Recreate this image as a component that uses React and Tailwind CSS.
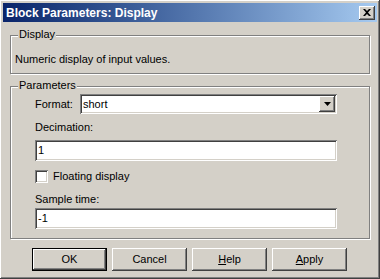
import React from 'react';

// Classic Win2000 3D edges
const raised = 'bg-[#d4d0c8] shadow-[inset_-1px_-1px_#404040,inset_1px_1px_#ffffff,inset_-2px_-2px_#808080,inset_2px_2px_#d4d0c8]';
const sunken = 'bg-white shadow-[inset_1px_1px_#808080,inset_-1px_-1px_#ffffff,inset_2px_2px_#404040,inset_-2px_-2px_#d4d0c8]';

const GroupBox = ({ label, className, children }) => (
  <div className={`relative border border-[#808080] shadow-[inset_1px_1px_#ffffff,1px_1px_#ffffff] ${className}`}>
    <span className="absolute left-[7px] top-[-8px] bg-[#d4d0c8] px-px leading-[13px]">{label}</span>
    {children}
  </div>
);

const TextField = ({ value }) => (
  <div className={`h-[21px] w-[302px] ${sunken} pl-[3px] flex items-center`}>{value}</div>
);

const Button = ({ children, isDefault }) => (
  <div className={`w-[75px] h-[23px] flex items-center justify-center ${isDefault ? 'border border-black' : ''} ${raised}`}>
    {children}
  </div>
);

const App = () => {
  return (
    <div className={`w-[380px] h-[279px] p-[3px] flex flex-col ${raised} font-['Liberation_Sans',Arial,sans-serif] text-[11px] text-black`}>
      {/* Barra de título */}
      <div className="h-[19px] flex items-center justify-between pl-[3px] pr-[2px] bg-linear-to-r from-[#0a246a] to-[#a6caf0]">
        <span className="text-white font-bold text-[12px] leading-none">Block Parameters: Display</span>
        <div className={`w-[16px] h-[14px] flex items-center justify-center ${raised}`}>
          <svg width="8" height="7" viewBox="0 0 8 7">
            <path d="M0 0h2l2 2 2-2h2L5 3.5 8 7H6L4 5 2 7H0l3-3.5z" fill="black" />
          </svg>
        </div>
      </div>

      <GroupBox label="Display" className="mt-[13px] mx-[7px] h-[39px] pt-[15px] pl-[4px]">
        <span className="leading-[13px]">Numeric display of input values.</span>
      </GroupBox>

      <GroupBox label="Parameters" className="mt-[12px] mx-[7px] h-[153px] pl-[24px] pt-[7px] flex flex-col">
        <div className="flex items-center">
          <span className="w-[45px] leading-[13px]">Format:</span>
          <div className={`h-[20px] w-[257px] ${sunken} pl-[3px] pr-[2px] flex items-center justify-between`}>
            <span>short</span>
            <div className={`w-[16px] h-[16px] flex items-center justify-center ${raised}`}>
              <svg width="7" height="4" viewBox="0 0 7 4">
                <path d="M0 0h7L3.5 4z" fill="black" />
              </svg>
            </div>
          </div>
        </div>
        <span className="mt-[7px] leading-[13px]">Decimation:</span>
        <div className="mt-[6px]">
          <TextField value="1" />
        </div>
        <div className="mt-[9px] flex items-center">
          <div className={`w-[13px] h-[13px] ${sunken}`} />
          <span className="ml-[5px] leading-[13px]">Floating display</span>
        </div>
        <span className="mt-[10px] leading-[13px]">Sample time:</span>
        <div className="mt-[2px]">
          <TextField value="-1" />
        </div>
      </GroupBox>

      <div className="mt-[9px] pl-[29px] flex gap-[5px]">
        <Button isDefault>OK</Button>
        <Button>Cancel</Button>
        <Button><span><span className="underline">H</span>elp</span></Button>
        <Button><span><span className="underline">A</span>pply</span></Button>
      </div>
    </div>
  );
};

export default App;
